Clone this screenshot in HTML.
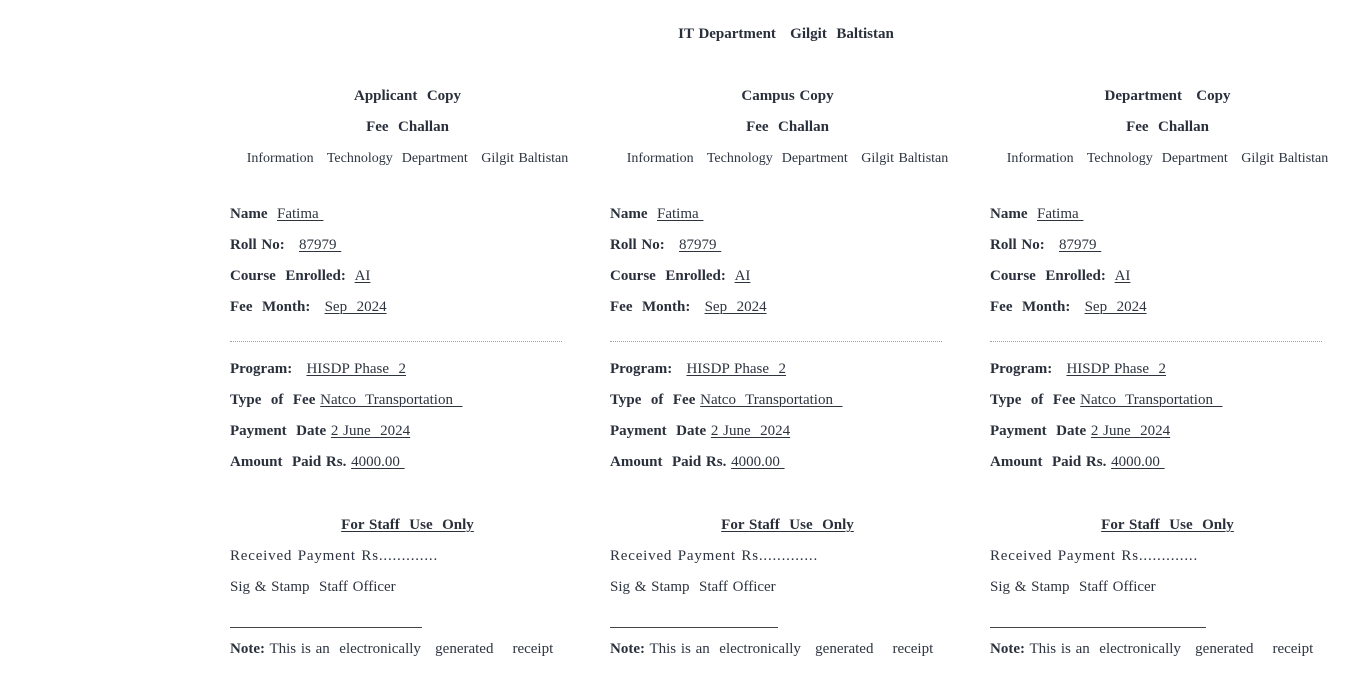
<!DOCTYPE html>
<html><head><meta charset="utf-8"><style>
body{margin:0;width:1359px;height:678px;background:#fff;font-family:"Liberation Serif","Times New Roman","DejaVu Serif",serif;font-size:15px;color:#2d3440;position:relative;overflow:hidden;word-spacing:1px}
.l{position:absolute;line-height:20px;white-space:pre}
.c{width:355px;text-align:center}
b{font-weight:bold;color:#2a303b}
u{text-decoration:underline;text-underline-offset:2px;text-decoration-thickness:1px}
.dots{position:absolute;height:0;border-top:1px dotted #9aa0a8;width:332px}
.sig{position:absolute;height:0;border-top:1px solid #444}
.r{letter-spacing:0.8px}
</style></head><body>
<div class="l" style="left:0;top:24px;padding-left:213px;box-sizing:border-box;width:1359px;text-align:center"><b>IT Department   Gilgit  Baltistan</b></div>

<!-- column 1 -->
<div class="l c" style="left:230px;top:86px"><b>Applicant  Copy</b></div>
<div class="l c" style="left:230px;top:117px"><b>Fee  Challan</b></div>
<div class="l c" style="left:230px;top:149px;font-size:14px">Information   Technology  Department   Gilgit Baltistan</div>
<div class="l" style="left:230px;top:204px"><b>Name</b>  <u>Fatima </u></div>
<div class="l" style="left:230px;top:235px"><b>Roll No:</b>   <u>87979 </u></div>
<div class="l" style="left:230px;top:266px"><b>Course  Enrolled:</b>  <u>AI</u></div>
<div class="l" style="left:230px;top:297px"><b>Fee  Month:</b>   <u>Sep  2024</u></div>
<div class="dots" style="left:230px;top:341px"></div>
<div class="l" style="left:230px;top:359px"><b>Program:</b>   <u>HISDP Phase  2</u></div>
<div class="l" style="left:230px;top:390px"><b>Type  of  Fee</b> <u>Natco  Transportation  </u></div>
<div class="l" style="left:230px;top:421px"><b>Payment  Date</b> <u>2 June  2024</u></div>
<div class="l" style="left:230px;top:452px"><b>Amount  Paid Rs.</b> <u>4000.00 </u></div>
<div class="l c" style="left:230px;top:515px"><b><u>For Staff  Use  Only</u></b></div>
<div class="l r" style="left:230px;top:546px">Received Payment Rs.............</div>
<div class="l" style="left:230px;top:577px">Sig &amp; Stamp  Staff Officer</div>
<div class="sig" style="left:230px;top:627px;width:192px"></div>
<div class="l" style="left:230px;top:639px"><b>Note:</b> This is an  electronically   generated    receipt</div>

<!-- column 2 -->
<div class="l c" style="left:610px;top:86px"><b>Campus Copy</b></div>
<div class="l c" style="left:610px;top:117px"><b>Fee  Challan</b></div>
<div class="l c" style="left:610px;top:149px;font-size:14px">Information   Technology  Department   Gilgit Baltistan</div>
<div class="l" style="left:610px;top:204px"><b>Name</b>  <u>Fatima </u></div>
<div class="l" style="left:610px;top:235px"><b>Roll No:</b>   <u>87979 </u></div>
<div class="l" style="left:610px;top:266px"><b>Course  Enrolled:</b>  <u>AI</u></div>
<div class="l" style="left:610px;top:297px"><b>Fee  Month:</b>   <u>Sep  2024</u></div>
<div class="dots" style="left:610px;top:341px"></div>
<div class="l" style="left:610px;top:359px"><b>Program:</b>   <u>HISDP Phase  2</u></div>
<div class="l" style="left:610px;top:390px"><b>Type  of  Fee</b> <u>Natco  Transportation  </u></div>
<div class="l" style="left:610px;top:421px"><b>Payment  Date</b> <u>2 June  2024</u></div>
<div class="l" style="left:610px;top:452px"><b>Amount  Paid Rs.</b> <u>4000.00 </u></div>
<div class="l c" style="left:610px;top:515px"><b><u>For Staff  Use  Only</u></b></div>
<div class="l r" style="left:610px;top:546px">Received Payment Rs.............</div>
<div class="l" style="left:610px;top:577px">Sig &amp; Stamp  Staff Officer</div>
<div class="sig" style="left:610px;top:627px;width:168px"></div>
<div class="l" style="left:610px;top:639px"><b>Note:</b> This is an  electronically   generated    receipt</div>

<!-- column 3 -->
<div class="l c" style="left:990px;top:86px"><b>Department   Copy</b></div>
<div class="l c" style="left:990px;top:117px"><b>Fee  Challan</b></div>
<div class="l c" style="left:990px;top:149px;font-size:14px">Information   Technology  Department   Gilgit Baltistan</div>
<div class="l" style="left:990px;top:204px"><b>Name</b>  <u>Fatima </u></div>
<div class="l" style="left:990px;top:235px"><b>Roll No:</b>   <u>87979 </u></div>
<div class="l" style="left:990px;top:266px"><b>Course  Enrolled:</b>  <u>AI</u></div>
<div class="l" style="left:990px;top:297px"><b>Fee  Month:</b>   <u>Sep  2024</u></div>
<div class="dots" style="left:990px;top:341px"></div>
<div class="l" style="left:990px;top:359px"><b>Program:</b>   <u>HISDP Phase  2</u></div>
<div class="l" style="left:990px;top:390px"><b>Type  of  Fee</b> <u>Natco  Transportation  </u></div>
<div class="l" style="left:990px;top:421px"><b>Payment  Date</b> <u>2 June  2024</u></div>
<div class="l" style="left:990px;top:452px"><b>Amount  Paid Rs.</b> <u>4000.00 </u></div>
<div class="l c" style="left:990px;top:515px"><b><u>For Staff  Use  Only</u></b></div>
<div class="l r" style="left:990px;top:546px">Received Payment Rs.............</div>
<div class="l" style="left:990px;top:577px">Sig &amp; Stamp  Staff Officer</div>
<div class="sig" style="left:990px;top:627px;width:216px"></div>
<div class="l" style="left:990px;top:639px"><b>Note:</b> This is an  electronically   generated    receipt</div>
</body></html>
